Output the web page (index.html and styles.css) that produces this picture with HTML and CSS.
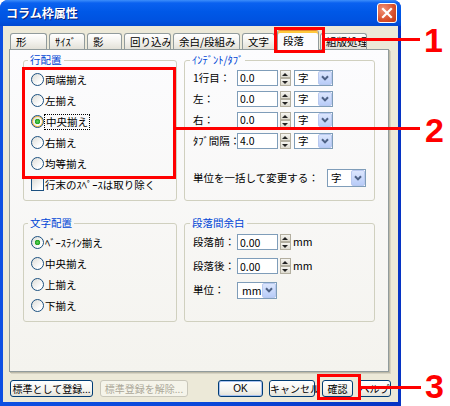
FILE: index.html
```html
<!DOCTYPE html>
<html lang="ja">
<head>
    <meta charset="utf-8">
    <title>コラム枠属性</title>
    <meta name="viewport" content="width=device-width, initial-scale=1.0">
    <link rel="stylesheet" href="styles.css">
</head>
<body>
    <div class="window">
        <div class="titlebar">
            <span class="title">コラム枠属性</span>
            <button class="close-btn" type="button">
                <svg width="12" height="12" viewBox="0 0 12 12"><path d="M2 2 L10 10 M10 2 L2 10" stroke="#fff" stroke-width="2.2" stroke-linecap="square"/></svg>
            </button>
        </div>

        <div class="client">
            <div class="tabs">
                <div class="tab">形</div>
                <div class="tab">ｻｲｽﾞ</div>
                <div class="tab">影</div>
                <div class="tab">回り込み</div>
                <div class="tab">余白/段組み</div>
                <div class="tab">文字</div>
                <div class="tab active">段落</div>
                <div class="tab">組版処理</div>
            </div>

            <div class="panel">
                <fieldset class="group">
                    <legend>行配置</legend>
                    <label class="opt"><input class="radio" type="radio" name="line"><span>両端揃え</span></label>
                    <label class="opt"><input class="radio" type="radio" name="line"><span>左揃え</span></label>
                    <label class="opt"><input class="radio hot" type="radio" name="line" checked><span class="focus">中央揃え</span></label>
                    <label class="opt"><input class="radio" type="radio" name="line"><span>右揃え</span></label>
                    <label class="opt"><input class="radio" type="radio" name="line"><span>均等揃え</span></label>
                    <label class="opt"><input class="check" type="checkbox"><span>行末のｽﾍﾟｰｽは取り除く</span></label>
                </fieldset>

                <fieldset class="group indent">
                    <legend>ｲﾝﾃﾞﾝﾄ/ﾀﾌﾞ</legend>
                    <div class="field">
                        <span class="lbl">1行目：</span>
                        <input class="num" value="0.0">
                        <span class="spin"><i class="up"></i><i class="down"></i></span>
                        <span class="combo"><span class="val">字</span><span class="drop"><svg width="8" height="6" viewBox="0 0 8 6"><path d="M1 1.2 L4 4.4 L7 1.2" fill="none" stroke="#4D6185" stroke-width="2"/></svg></span></span>
                    </div>
                    <div class="field">
                        <span class="lbl">左：</span>
                        <input class="num" value="0.0">
                        <span class="spin"><i class="up"></i><i class="down"></i></span>
                        <span class="combo"><span class="val">字</span><span class="drop"><svg width="8" height="6" viewBox="0 0 8 6"><path d="M1 1.2 L4 4.4 L7 1.2" fill="none" stroke="#4D6185" stroke-width="2"/></svg></span></span>
                    </div>
                    <div class="field">
                        <span class="lbl">右：</span>
                        <input class="num" value="0.0">
                        <span class="spin"><i class="up"></i><i class="down"></i></span>
                        <span class="combo"><span class="val">字</span><span class="drop"><svg width="8" height="6" viewBox="0 0 8 6"><path d="M1 1.2 L4 4.4 L7 1.2" fill="none" stroke="#4D6185" stroke-width="2"/></svg></span></span>
                    </div>
                    <div class="field">
                        <span class="lbl">ﾀﾌﾞ間隔：</span>
                        <input class="num" value="4.0">
                        <span class="spin"><i class="up"></i><i class="down"></i></span>
                        <span class="combo"><span class="val">字</span><span class="drop"><svg width="8" height="6" viewBox="0 0 8 6"><path d="M1 1.2 L4 4.4 L7 1.2" fill="none" stroke="#4D6185" stroke-width="2"/></svg></span></span>
                    </div>
                    <div class="unit-row">
                        <span>単位を一括して変更する：</span>
                        <span class="combo tall"><span class="val">字</span><span class="drop"><svg width="8" height="6" viewBox="0 0 8 6"><path d="M1 1.2 L4 4.4 L7 1.2" fill="none" stroke="#4D6185" stroke-width="2"/></svg></span></span>
                    </div>
                </fieldset>

                <fieldset class="group">
                    <legend>文字配置</legend>
                    <label class="opt"><input class="radio" type="radio" name="char" checked><span>ﾍﾞｰｽﾗｲﾝ揃え</span></label>
                    <label class="opt"><input class="radio" type="radio" name="char"><span>中央揃え</span></label>
                    <label class="opt"><input class="radio" type="radio" name="char"><span>上揃え</span></label>
                    <label class="opt"><input class="radio" type="radio" name="char"><span>下揃え</span></label>
                </fieldset>

                <fieldset class="group indent spacing">
                    <legend>段落間余白</legend>
                    <div class="field">
                        <span class="lbl">段落前：</span>
                        <input class="num" value="0.00">
                        <span class="spin"><i class="up"></i><i class="down"></i></span>
                        <span class="unit">mm</span>
                    </div>
                    <div class="field">
                        <span class="lbl">段落後：</span>
                        <input class="num" value="0.00">
                        <span class="spin"><i class="up"></i><i class="down"></i></span>
                        <span class="unit">mm</span>
                    </div>
                    <div class="field">
                        <span class="lbl">単位：</span>
                        <span class="combo mm"><span class="val">mm</span><span class="drop"><svg width="8" height="6" viewBox="0 0 8 6"><path d="M1 1.2 L4 4.4 L7 1.2" fill="none" stroke="#4D6185" stroke-width="2"/></svg></span></span>
                    </div>
                </fieldset>
            </div>

            <div class="footer">
                <button class="btn btn-register" type="button">標準として登録...</button>
                <button class="btn btn-unregister" type="button" disabled>標準登録を解除...</button>
                <button class="btn btn-ok" type="button">OK</button>
                <button class="btn btn-cancel" type="button">キャンセル</button>
                <button class="btn btn-check" type="button">確認</button>
                <button class="btn btn-help" type="button">ヘルプ</button>
            </div>
        </div>
    </div>

    <!-- callouts -->
    <div class="mark mark-box box-1"></div>
    <div class="mark mark-line line-1"></div>
    <div class="mark mark-num num-1">1</div>

    <div class="mark mark-box box-2"></div>
    <div class="mark mark-line line-2"></div>
    <div class="mark mark-num num-2">2</div>

    <div class="mark mark-box box-3"></div>
    <div class="mark mark-line line-3"></div>
    <div class="mark mark-num num-3">3</div>
</body>
</html>
```

FILE: styles.css
```css
body {
    margin: 0;
    width: 450px;
    height: 406px;
    background-color: #fff;
    font-family: "Noto Sans CJK JP", sans-serif;
    font-size: 10.5px;
    line-height: 14px;
    color: #000;
    overflow: hidden;
}
.window {
    width: 401px;
    height: 406px;
    box-sizing: border-box;
    padding: 0 3px 4px;
    background: linear-gradient(to right, #0D4FE2, #0A48DA 50%, #0634C4);
    border-radius: 8px 8px 0 0;
    display: flex;
    flex-direction: column;
}
.titlebar {
    height: 26px;
    margin: 0 -3px;
    padding: 0 4px 0 6px;
    display: flex;
    align-items: center;
    justify-content: space-between;
    border-radius: 8px 8px 0 0;
    background: linear-gradient(#3D8EFA, #0A61F0 3px, #0058E7 45%, #0052E0 80%, #0049D2);
}
.title {
    color: #fff;
    font-weight: bold;
    font-size: 12px;
    text-shadow: 1px 1px 0 #0A1E7A;
}
.close-btn {
    width: 20px;
    height: 20px;
    padding: 0;
    border: 1px solid #fff;
    border-radius: 3px;
    background: radial-gradient(circle at 30% 30%, #F09278, #D8502C 60%, #C23A14);
    display: flex;
    align-items: center;
    justify-content: center;
}
.client {
    flex: 1;
    background-color: #ECE9D8;
    padding: 4px 7px 0 6px;
    display: flex;
    flex-direction: column;
}

/* tab strip */
.tabs {
    display: flex;
    align-items: flex-end;
    height: 19px;
    padding-left: 1px;
}
.tab {
    height: 16px;
    box-sizing: border-box;
    margin-right: 2px;
    padding-left: 5px;
    border: 1px solid #919B9C;
    border-bottom: none;
    border-radius: 3px 3px 0 0;
    background: linear-gradient(#FFFFFF, #F3F2EE 50%, #E3E1D8);
    line-height: 15px;
    white-space: nowrap;
    overflow: hidden;
}
.tab:nth-child(1) { width: 37px; }
.tab:nth-child(2) { width: 36px; }
.tab:nth-child(3) { width: 35px; }
.tab:nth-child(4) { width: 47px; }
.tab:nth-child(5) { width: 67px; }
.tab:nth-child(6) { width: 33px; }
.tab:nth-child(7) { width: 42px; margin-right: 1px; }
.tab:nth-child(8) { width: 47px; }
.tab.active {
    height: 20px;
    margin-bottom: -1px;
    padding-top: 2px;
    position: relative;
    z-index: 1;
    border-top-color: #E68B2C;
    background: #FCFCFE;
    box-shadow: inset 0 2px 0 #FFC83C;
}

.panel {
    width: 380px;
    height: 323px;
    box-sizing: border-box;
    border: 1px solid #919B9C;
    box-shadow: 1px 1px 0 #BDBAA8, 2px 2px 0 #D6D3C4;
    background: linear-gradient(#FCFCFE, #F4F3EE);
    padding: 3px 13px 0;
    display: grid;
    grid-template-columns: 154px 191px;
    column-gap: 7px;
    row-gap: 15px;
    align-content: start;
}

/* group boxes */
.group {
    margin: 0;
    padding: 2px 7px 5px;
    border: 1px solid #D0D0BF;
    border-radius: 3px;
    min-width: 0;
}
.group legend {
    padding: 0 2px;
    margin-left: -3px;
    color: #0046D5;
    line-height: 14px;
}
.indent {
    padding: 0 8px 4px;
}
.opt {
    display: flex;
    align-items: center;
    gap: 1px;
    height: 21px;
}
.radio,
.check {
    -webkit-appearance: none;
    appearance: none;
    width: 13px;
    height: 13px;
    margin: 0;
    box-sizing: border-box;
    border: 1px solid #1C5180;
    background: linear-gradient(135deg, #DCDCD7, #FFFFFF 75%);
}
.radio {
    border-radius: 50%;
}
.radio:checked {
    background: radial-gradient(circle, #5DD35D 0, #21A121 2.5px, transparent 3px), linear-gradient(135deg, #DCDCD7, #FFFFFF 75%);
}
.radio.hot {
    box-shadow: inset 0 0 0 1px #F8B636;
}
.focus {
    outline: 1px dotted #000;
    padding: 0 1px;
}

/* numeric fields */
.field {
    display: flex;
    align-items: center;
    height: 21px;
}
.lbl {
    width: 44px;
    white-space: nowrap;
}
.num {
    width: 41px;
    height: 16px;
    box-sizing: border-box;
    margin: 0 2px 0 0;
    padding: 0 2px;
    border: 1px solid #7F9DB9;
    background: #fff;
    font: inherit;
    line-height: 14px;
}
.spin {
    width: 11px;
    height: 16px;
    margin-right: 3px;
    display: flex;
    flex-direction: column;
}
.spin i {
    flex: 1;
    position: relative;
    box-sizing: border-box;
    border: 1px solid #B3AFA0;
    background: linear-gradient(#F6F5F0, #DEDBD0);
}
.spin i::after {
    content: "";
    position: absolute;
    left: 1px;
    top: 2px;
    border-left: 3.5px solid transparent;
    border-right: 3.5px solid transparent;
}
.spin .up::after {
    border-bottom: 3px solid #222;
}
.spin .down::after {
    border-top: 3px solid #222;
}
.combo {
    width: 39px;
    height: 16px;
    box-sizing: border-box;
    border: 1px solid #7F9DB9;
    background: #fff;
    display: flex;
}
.combo.tall {
    height: 18px;
}
.combo .val {
    flex: 1;
    padding-left: 3px;
    line-height: 14px;
}
.combo.tall .val {
    line-height: 16px;
}
.combo .drop {
    width: 14px;
    box-sizing: border-box;
    border: 1px solid #B9C9EF;
    border-radius: 2px;
    background: linear-gradient(#DCE6FD, #B8CCF8);
    display: flex;
    align-items: center;
    justify-content: center;
}
.unit-row {
    display: flex;
    justify-content: space-between;
    align-items: center;
    height: 18px;
    margin-top: 18px;
}
.spacing .field {
    height: 24px;
}
.combo.mm {
    width: 40px;
    height: 17px;
}
.combo.mm .val {
    line-height: 15px;
    padding-left: 4px;
}
.unit {
    margin-left: -1px;
}

/* bottom buttons */
.footer {
    display: flex;
    padding: 8px 0 0 1px;
}
.btn {
    height: 17px;
    box-sizing: border-box;
    padding: 0;
    border: 1px solid #003C74;
    border-radius: 3px;
    background: linear-gradient(#FFFFFF, #F4F4F0 60%, #E3E2D8);
    font-family: "Noto Sans CJK JP", sans-serif;
    font-size: 10px;
    line-height: 14px;
    color: #000;
    white-space: nowrap;
}
.btn:disabled {
    border-color: #C9C7BA;
    background: #F5F4EA;
    color: #ACA899;
}
.btn-register { width: 83px; }
.btn-unregister { width: 88px; margin-left: 7px; }
.btn-ok {
    width: 45px;
    margin-left: auto;
    box-shadow: inset 0 0 0 1px #A9C2F0;
    font-family: "Liberation Sans", sans-serif;
}
.btn-cancel { width: 46px; margin-left: 6px; }
.btn-check { width: 31px; margin-left: 7px; }
.btn-help { width: 33px; margin-left: 5px; }

/* red callouts drawn over the dialog */
.mark {
    position: absolute;
}
.mark-box {
    box-sizing: border-box;
    border: 3px solid #FF0000;
}
.mark-line {
    height: 3px;
    background-color: #FF0000;
}
.mark-num {
    font-family: "Liberation Sans", Arial, sans-serif;
    font-weight: bold;
    font-size: 34px;
    line-height: 34px;
    color: #FF0000;
}
.box-1 { left: 274px; top: 27px; width: 51px; height: 26px; }
.line-1 { left: 325px; top: 38px; width: 95px; }
.num-1 { left: 424px; top: 23px; }
.box-2 { left: 22px; top: 67px; width: 154px; height: 112px; }
.line-2 { left: 176px; top: 127px; width: 244px; }
.num-2 { left: 425px; top: 113px; }
.box-3 { left: 317px; top: 374px; width: 44px; height: 26px; }
.line-3 { left: 361px; top: 386px; width: 60px; }
.num-3 { left: 425px; top: 369px; }
```
